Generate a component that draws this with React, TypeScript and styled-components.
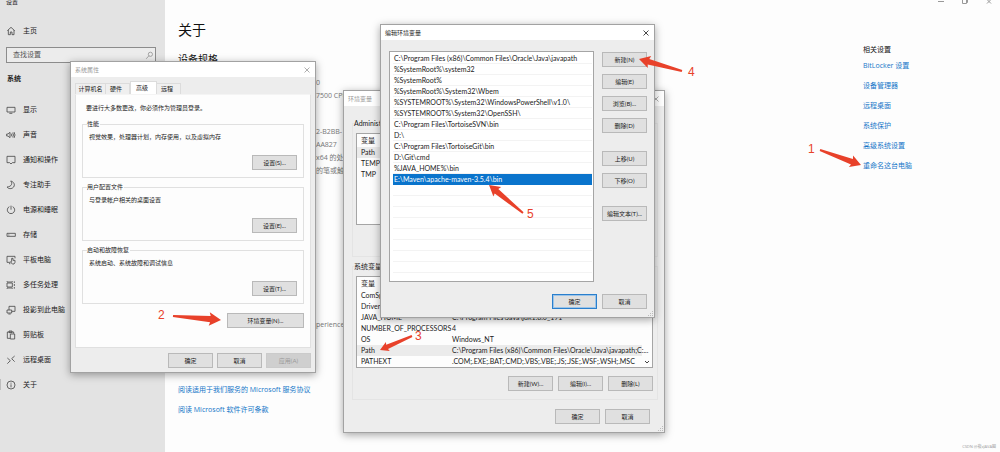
import React from "react";
import styled, { createGlobalStyle, css } from "styled-components";

const GlobalStyle = createGlobalStyle`
  *, *::before, *::after { box-sizing: border-box; }
  body {
    margin: 0;
    background: #fdfdfd;
    color: #222;
    font-family: "Open Sans", "Noto Sans CJK SC", sans-serif;
    font-size: 7px;
    line-height: 12px;
    overflow: hidden;
  }
  button, input { font: inherit; color: inherit; }
  ul { list-style: none; margin: 0; padding: 0; }
  h1, h2, h3, p { margin: 0; font-weight: 400; }
`;

/* ---------- settings page ---------- */

const Desktop = styled.div`
  position: relative;
  display: flex;
  min-height: 100vh;
  overflow: hidden;
`;

const Sidebar = styled.nav`
  flex: 0 0 165px;
  background: #e3e3e3;
`;

const AppTitle = styled.div`
  height: 5px;
  padding-left: 6px;
  font-size: 6px;
  line-height: 4px;
`;

const NavItem = styled.a<{ $active?: boolean }>`
  display: flex;
  align-items: center;
  gap: 7px;
  height: 25px;
  color: #1a1a1a;
  text-decoration: none;
  &::before {
    content: "";
    width: 1px;
    height: 11px;
    margin-right: -2px;
    background: ${(p) => (p.$active ? "#bdbdbd" : "transparent")};
  }
`;

const HomeItem = styled(NavItem)`
  margin-top: 13px;
`;

const SearchBox = styled.label`
  display: flex;
  align-items: center;
  height: 16px;
  margin: 4px 9px 8px 6px;
  padding: 0 1px 0 6px;
  background: #ececec;
  border: 1px solid #8c8c8c;
`;

const SearchInput = styled.input`
  flex: 1;
  min-width: 0;
  padding: 0;
  border: 0;
  outline: 0;
  background: transparent;
  &::placeholder { color: #555; opacity: 1; }
`;

const NavHeading = styled.h2`
  padding-left: 7px;
  margin-bottom: 10px;
  font-size: 7px;
  line-height: 16px;
  font-weight: 700;
`;

const Icon = styled.svg<{ $light?: boolean }>`
  flex: none;
  width: ${(p) => (p.$light ? 9 : 10)}px;
  height: ${(p) => (p.$light ? 9 : 10)}px;
  fill: none;
  stroke: ${(p) => (p.$light ? "#888" : "#444")};
  stroke-width: 2.4;
`;

const Main = styled.main`
  flex: 1;
  min-width: 0;
  padding: 20px 0 0 13px;
`;

const PageTitle = styled.h1`
  font-size: 14px;
  line-height: 20px;
  color: #111;
`;

const SectionTitle = styled.h2`
  margin-top: 12px;
  font-size: 10px;
  line-height: 14px;
  color: #111;
`;

const Specs = styled.ul<{ $gap: number }>`
  margin-top: ${(p) => p.$gap}px;
  padding-left: 138px;
  line-height: 13px;
  color: #777;
`;

const Terms = styled.div`
  display: flex;
  flex-direction: column;
  align-items: flex-start;
  margin-top: 49px;
`;

const Link = styled.a`
  line-height: 20px;
  color: #1576c8;
  text-decoration: none;
`;

const Related = styled.aside`
  display: flex;
  flex-direction: column;
  flex: 0 0 137px;
`;

const WindowControls = styled.div`
  display: flex;
  justify-content: flex-end;
  gap: 16px;
  height: 5px;
  margin-bottom: 39px;
  padding-right: 7px;
  overflow: hidden;
`;

const ControlGlyph = styled.svg`
  width: 8px;
  height: 5px;
  fill: none;
  stroke: #999;
`;

const RelatedTitle = styled.h3`
  font-size: 7px;
  line-height: 12px;
  color: #111;
`;

const Watermark = styled.small`
  margin: auto 4px 2px auto;
  font-size: 4px;
  line-height: 6px;
  color: #999;
`;

/* ---------- dialogs ---------- */

const Dialog = styled.section<{ $x: number; $y: number; $w: number }>`
  position: absolute;
  left: ${(p) => p.$x}px;
  top: ${(p) => p.$y}px;
  width: ${(p) => p.$w}px;
  border: 1px solid #a2a2a2;
  background: #ededed;
  box-shadow: 0 2px 8px rgba(0, 0, 0, 0.35);
  color: #1a1a1a;
  font-family: Lato, "Noto Sans CJK SC", sans-serif;
`;

const TitleBar = styled.header<{ $inactive?: boolean }>`
  display: flex;
  align-items: center;
  justify-content: space-between;
  height: 15px;
  padding: 0 5px 0 4px;
  background: #fff;
  color: ${(p) => (p.$inactive ? "#999" : "#1a1a1a")};
  font-size: 6px;
`;

const CloseButton = styled.button`
  display: flex;
  padding: 0;
  border: 0;
  background: none;
  svg { width: 6px; height: 6px; fill: none; stroke: currentColor; stroke-width: 0.8; }
`;

const Button = styled.button<{ $primary?: boolean; $wide?: boolean }>`
  width: ${(p) => (p.$wide ? 77 : 45)}px;
  height: 15px;
  padding: 0;
  border: 1px solid #b9b9b9;
  background: #e0e0e0;
  font-size: 6px;
  line-height: 12px;
  white-space: nowrap;
  ${(p) => p.$primary && css`
    border-color: #2a7fcd;
    box-shadow: inset 0 0 0 1px #9cc4e8;
  `}
  &:disabled { background: #cfcfcf; border-color: #cbcbcb; color: #999; }
`;

const ButtonRow = styled.div<{ $top: number; $right?: number; $gap?: number }>`
  display: flex;
  justify-content: flex-end;
  gap: ${(p) => p.$gap ?? 5}px;
  margin-top: ${(p) => p.$top}px;
  padding-right: ${(p) => p.$right ?? 0}px;
`;

const PropertiesBody = styled.div`
  padding: 4px 4px 4px;
  font-size: 6px;
`;

const Tabs = styled.div`
  display: flex;
  align-items: flex-end;
  height: 13px;
`;

const Tab = styled.button<{ $selected?: boolean }>`
  height: ${(p) => (p.$selected ? 13 : 11)}px;
  width: ${(p) => (p.$selected ? 27 : 24)}px;
  padding: 0 3px 0 0;
  border: 1px solid #dcdcdc;
  border-bottom: 0;
  border-left-width: ${(p) => (p.$selected ? 1 : 0)}px;
  background: ${(p) => (p.$selected ? "#fff" : "#efefef")};
  font-size: 6px;
  line-height: 10px;
  &:first-child { width: 31px; padding: 0; border-left-width: 1px; }
`;

const TabPanel = styled.div`
  padding: 7px 6px 19px;
  border: 1px solid #e0e0e0;
  border-top-color: #f4f4f4;
  background: #fdfdfd;
`;

const PanelNote = styled.p`
  margin-bottom: 4px;
  padding-left: 4px;
`;

const Group = styled.fieldset`
  min-width: 0;
  margin: 0 0 3px;
  padding: 1px 6px 7px 4px;
  border: 1px solid #e0e0e0;
  legend { padding: 0 1px 0 0; line-height: 12px; }
  p { padding-left: 2px; }
`;

const VariablesBody = styled.div`
  padding: 11px 6px 8px 8px;
`;

const VariableGroup = styled(Group)`
  padding: 4px 4px 8px 1px;
  border-color: #e4e4e4;
  font-size: 7px;
`;

const VariableBox = styled.div`
  display: flex;
  height: 92px;
  margin-left: 2px;
  border: 1px solid #a5a5a5;
  background: #fdfdfd;
`;

const VariableTable = styled.table`
  flex: 1;
  width: 0;
  align-self: flex-start;
  border-collapse: collapse;
  table-layout: fixed;
  font-size: 7px;
  line-height: 11px;
  th { height: 13px; font-weight: 400; text-align: left; }
  td { height: 11px; }
  th, td { padding: 0 0 0 4px; white-space: nowrap; }
  th:first-child { width: 91px; }
`;

const VariableRow = styled.tr<{ $selected?: boolean }>`
  background: ${(p) => (p.$selected ? "#ebebeb" : "transparent")};
`;

const ScrollTrack = styled.div`
  display: flex;
  align-items: flex-end;
  justify-content: center;
  width: 10px;
  padding-bottom: 2px;
  svg { width: 6px; height: 6px; fill: none; stroke: #444; }
`;

const EditBody = styled.div`
  padding: 11px 7px 8px 8px;
`;

const EditColumns = styled.div`
  display: flex;
  gap: 8px;
`;

const PathList = styled.ul`
  flex: 1;
  height: 231px;
  padding: 1px 1px 0 3px;
  border: 1px solid #a5a5a5;
  background: #fff;
  overflow: hidden;
`;

const PathRow = styled.li<{ $selected?: boolean }>`
  height: 11px;
  padding-left: 1px;
  border-bottom: 1px solid #f3f3f3;
  line-height: 11px;
  white-space: nowrap;
  ${(p) => p.$selected && css`
    background: #0a74cc;
    border-color: #0a74cc;
    color: #fff;
  `}
`;

const ActionStack = styled.div`
  display: flex;
  flex-direction: column;
  gap: 18px;
  padding-top: 1px;
`;

const ActionGroup = styled.div`
  display: flex;
  flex-direction: column;
  gap: 7px;
`;

const ResizeGrip = styled.svg`
  position: absolute;
  right: 1px;
  bottom: 1px;
  width: 5px;
  height: 5px;
  fill: #bbb;
`;

const Annotations = styled.svg`
  position: absolute;
  left: 0;
  top: 0;
  width: 1000px;
  height: 452px;
  pointer-events: none;
  fill: #e8412a;
  font-family: "Liberation Sans", sans-serif;
  font-size: 12px;
`;

const NAV: { label: string; icon: React.ReactNode; active?: boolean }[] = [
  { label: "显示", icon: <path d="M3 7h24v14H3zM10 25h9" /> },
  { label: "声音", icon: <path d="M2 12h4l6-5v16l-6-5H2zM16 11q3 4 0 8M20 8q5 7 0 14M24 6q6 9 0 18" /> },
  { label: "通知和操作", icon: <path d="M3 4h24v19h-8l-4 4-4-4H3z" /> },
  { label: "专注助手", icon: <path d="M14 3c6 6 4 17-11 18 4 6 14 7 20 0 5-8 0-16-9-18z" /> },
  { label: "电源和睡眠", icon: <path d="M15 2v12M10 5a11 11 0 1 0 10 0" /> },
  { label: "存储", icon: <path d="M3 10h25v9H3zM7 15h3" /> },
  { label: "平板电脑", icon: <path d="M13 22H3V4h24v6M9 26h4M17 25l-3-5 3-1V10h4v6h6v6l-3 5h-5z" /> },
  { label: "多任务处理", icon: <path d="M3 9h16v12H3zM3 4v2h16V4M3 26v-2h16v2M25 4v5M25 12v6M25 21v5" /> },
  { label: "投影到此电脑", icon: <path d="M9 15V4h18v15h-9M3 15h14v9H3zM7 27h7" /> },
  { label: "剪贴板", icon: <path d="M12 25H4V6h19v5M9 6V3h9v5H9zM13 12h13v15H13z" /> },
  { label: "远程桌面", icon: <path d="M4 9l9 8-9 9M26 3l-9 8 9 9" /> },
  { label: "关于", active: true, icon: <><circle cx="15" cy="15" r="12" /><path d="M15 13v9M15 8v3" /></> },
];

const RELATED = ["BitLocker 设置", "设备管理器", "远程桌面", "系统保护", "高级系统设置", "重命名这台电脑"];

const PATHS = [
  "C:\\Program Files (x86)\\Common Files\\Oracle\\Java\\javapath",
  "%SystemRoot%\\system32",
  "%SystemRoot%",
  "%SystemRoot%\\System32\\Wbem",
  "%SYSTEMROOT%\\System32\\WindowsPowerShell\\v1.0\\",
  "%SYSTEMROOT%\\System32\\OpenSSH\\",
  "C:\\Program Files\\TortoiseSVN\\bin",
  "D:\\",
  "C:\\Program Files\\TortoiseGit\\bin",
  "D:\\Git\\cmd",
  "%JAVA_HOME%\\bin",
  "E:\\Maven\\apache-maven-3.5.4\\bin",
];
const EMPTY_ROWS = 9;

const USER_VARS: [string, string][] = [["Path", ""], ["TEMP", ""], ["TMP", ""]];

const SYSTEM_VARS: [string, string][] = [
  ["ComSpec", ""],
  ["DriverData", ""],
  ["JAVA_HOME", "C:\\Program Files\\Java\\jdk1.8.0_191"],
  ["NUMBER_OF_PROCESSORS", "4"],
  ["OS", "Windows_NT"],
  ["Path", "C:\\Program Files (x86)\\Common Files\\Oracle\\Java\\javapath;C:..."],
  ["PATHEXT", ".COM;.EXE;.BAT;.CMD;.VBS;.VBE;.JS;.JSE;.WSF;.WSH;.MSC"],
];

const GROUPS = [
  { title: "性能", text: "视觉效果，处理器计划，内存使用，以及虚拟内存", button: "设置(S)..." },
  { title: "用户配置文件", text: "与登录帐户相关的桌面设置", button: "设置(E)..." },
  { title: "启动和故障恢复", text: "系统启动、系统故障和调试信息", button: "设置(T)..." },
];

const ACTIONS = [
  ["新建(N)", "编辑(E)", "浏览(B)...", "删除(D)"],
  ["上移(U)", "下移(O)"],
  ["编辑文本(T)..."],
];

const STEPS = [
  { n: 1, at: [808, 153], tail: [820, 150], tip: [861, 165] },
  { n: 2, at: [158, 319], tail: [173, 316], tip: [221, 320] },
  { n: 3, at: [415, 340], tail: [412, 336], tip: [380, 350] },
  { n: 4, at: [688, 76], tail: [682, 71], tip: [639, 59] },
  { n: 5, at: [527, 218], tail: [523, 213], tip: [489, 185] },
];

/* Tapered arrow: thin at the tail, widening into a barbed head at the tip. */
function arrowPoints([x0, y0]: number[], [x1, y1]: number[]) {
  const length = Math.hypot(x1 - x0, y1 - y0);
  const size = Math.min(1.15, length / 43);
  const ux = (x1 - x0) / length;
  const uy = (y1 - y0) / length;
  const at = (back: number, side: number) =>
    `${(x1 - ux * back - uy * side).toFixed(1)},${(y1 - uy * back + ux * side).toFixed(1)}`;
  return [
    at(length, -1), at(9.5 * size, -2.8 * size), at(10.5 * size, -6 * size), at(0, 0),
    at(10.5 * size, 6 * size), at(9.5 * size, 2.8 * size), at(length, 1),
  ].join(" ");
}

function DialogTitle({ title, inactive }: { title: string; inactive?: boolean }) {
  return (
    <TitleBar $inactive={inactive}>
      <span>{title}</span>
      <CloseButton aria-label="关闭">
        <svg viewBox="0 0 6 6"><path d="M.5.5l5 5M5.5.5l-5 5" /></svg>
      </CloseButton>
    </TitleBar>
  );
}

function Variables({ rows, selected, scroll }: { rows: [string, string][]; selected: string; scroll?: boolean }) {
  return (
    <VariableBox>
      <VariableTable>
        <thead><tr><th>变量</th><th /></tr></thead>
        <tbody>
          {rows.map(([name, value]) => (
            <VariableRow key={name} $selected={name === selected}>
              <td>{name}</td><td>{value}</td>
            </VariableRow>
          ))}
        </tbody>
      </VariableTable>
      {scroll && (
        <ScrollTrack><svg viewBox="0 0 6 6"><path d="M1 2l2 2 2-2" /></svg></ScrollTrack>
      )}
    </VariableBox>
  );
}

const Grip = () => (
  <ResizeGrip viewBox="0 0 5 5"><path d="M4 0h1v1H4zM2 2h1v1H2zM4 2h1v1H4zM0 4h1v1H0zM2 4h1v1H2zM4 4h1v1H4z" /></ResizeGrip>
);

export default function App() {
  return (
    <Desktop lang="zh-CN">
      <GlobalStyle />
      <Sidebar>
        <AppTitle>设置</AppTitle>
        <HomeItem href="#home">
          <Icon viewBox="0 0 30 30"><path d="M4 14L15 4l11 10M7 12v14h6v-8h5v8h6V12" /></Icon>
          主页
        </HomeItem>
        <SearchBox>
          <SearchInput type="text" placeholder="查找设置" aria-label="查找设置" />
          <Icon $light viewBox="0 0 30 30"><circle cx="18" cy="11" r="7" /><path d="M13 16L4 26" /></Icon>
        </SearchBox>
        <NavHeading>系统</NavHeading>
        {NAV.map((item) => (
          <NavItem key={item.label} href="#" $active={item.active}>
            <Icon viewBox="0 0 30 30">{item.icon}</Icon>
            {item.label}
          </NavItem>
        ))}
      </Sidebar>

      <Main>
        <PageTitle>关于</PageTitle>
        <SectionTitle>设备规格</SectionTitle>
        <Specs $gap={10}>
          <li>0</li>
          <li>7500 CPU</li>
        </Specs>
        <Specs $gap={23}>
          <li>2-B2BB-</li>
          <li>AA827</li>
          <li>x64 的处</li>
          <li>的笔或触</li>
        </Specs>
        <Specs $gap={141}>
          <li>perience</li>
        </Specs>
        <Terms>
          <Link href="#services">阅读适用于我们服务的 Microsoft 服务协议</Link>
          <Link href="#license">阅读 Microsoft 软件许可条款</Link>
        </Terms>
      </Main>

      <Related>
        <WindowControls>
          <ControlGlyph viewBox="0 0 8 5"><path d="M1 1.5h6" /></ControlGlyph>
          <ControlGlyph viewBox="0 0 8 5"><path d="M1.5 0v3.5h4V0M5.500 2.500h1V0" /></ControlGlyph>
          <ControlGlyph viewBox="0 0 8 5"><path d="M2 3.500l4-4M6 3.500l-4-4" /></ControlGlyph>
        </WindowControls>
        <RelatedTitle>相关设置</RelatedTitle>
        {RELATED.map((label) => <Link key={label} href="#">{label}</Link>)}
        <Watermark>CSDN @夜xJAVA圈</Watermark>
      </Related>

      <Dialog $x={70} $y={61} $w={246} aria-label="系统属性">
        <DialogTitle title="系统属性" inactive />
        <PropertiesBody>
          <Tabs role="tablist">
            <Tab role="tab">计算机名</Tab>
            <Tab role="tab">硬件</Tab>
            <Tab role="tab" aria-selected $selected>高级</Tab>
            <Tab role="tab">远程</Tab>
          </Tabs>
          <TabPanel role="tabpanel">
            <PanelNote>要进行大多数更改，你必须作为管理员登录。</PanelNote>
            {GROUPS.map((group) => (
              <Group key={group.title}>
                <legend>{group.title}</legend>
                <p>{group.text}</p>
                <ButtonRow $top={12}><Button>{group.button}</Button></ButtonRow>
              </Group>
            ))}
            <ButtonRow $top={9}><Button $wide>环境变量(N)...</Button></ButtonRow>
          </TabPanel>
          <ButtonRow $top={5} $gap={4}>
            <Button>确定</Button>
            <Button>取消</Button>
            <Button disabled>应用(A)</Button>
          </ButtonRow>
        </PropertiesBody>
      </Dialog>

      <Dialog $x={343} $y={90} $w={322} aria-label="环境变量">
        <DialogTitle title="环境变量" inactive />
        <VariablesBody>
          <VariableGroup>
            <legend>Administrator</legend>
            <Variables rows={USER_VARS} selected="Path" />
            <ButtonRow $top={8}>
              <Button>新建(N)...</Button>
              <Button>编辑(E)...</Button>
              <Button>删除(D)</Button>
            </ButtonRow>
          </VariableGroup>
          <VariableGroup>
            <legend>系统变量</legend>
            <Variables rows={SYSTEM_VARS} selected="Path" scroll />
            <ButtonRow $top={8}>
              <Button>新建(W)...</Button>
              <Button>编辑(I)...</Button>
              <Button>删除(L)</Button>
            </ButtonRow>
          </VariableGroup>
          <ButtonRow $top={9} $right={8}>
            <Button>确定</Button>
            <Button>取消</Button>
          </ButtonRow>
        </VariablesBody>
        <Grip />
      </Dialog>

      <Dialog $x={380} $y={24} $w={275} aria-label="编辑环境变量">
        <DialogTitle title="编辑环境变量" />
        <EditBody>
          <EditColumns>
            <PathList>
              {PATHS.map((path, i) => (
                <PathRow key={path} $selected={i === PATHS.length - 1}>{path}</PathRow>
              ))}
              {Array.from({ length: EMPTY_ROWS }, (_, i) => <PathRow key={i} />)}
            </PathList>
            <ActionStack>
              {ACTIONS.map((group) => (
                <ActionGroup key={group[0]}>
                  {group.map((label) => <Button key={label}>{label}</Button>)}
                </ActionGroup>
              ))}
            </ActionStack>
          </EditColumns>
          <ButtonRow $top={12}>
            <Button $primary>确定</Button>
            <Button>取消</Button>
          </ButtonRow>
        </EditBody>
        <Grip />
      </Dialog>

      <Annotations viewBox="0 0 1000 452">
        {STEPS.map((step) => (
          <g key={step.n}>
            <text x={step.at[0]} y={step.at[1]}>{step.n}</text>
            <polygon points={arrowPoints(step.tail, step.tip)} />
          </g>
        ))}
      </Annotations>
    </Desktop>
  );
}
